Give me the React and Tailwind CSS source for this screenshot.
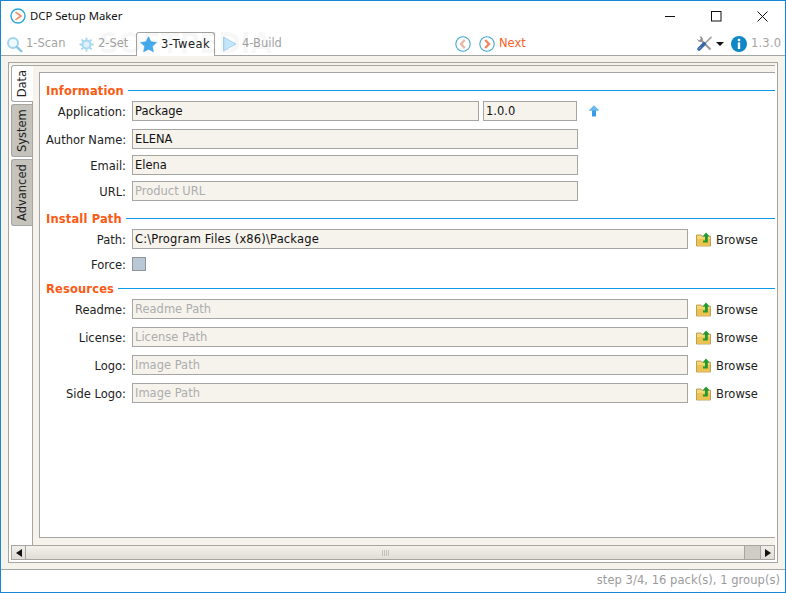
import React from "react";

function AppIcon() {
  return (
    <svg width="16" height="16" viewBox="0 0 16 16" className="shrink-0">
      <circle cx="8" cy="8" r="7" fill="#fff" stroke="#2ba6dc" strokeWidth="1.4" />
      <path d="M5.5 4.2 L11 8 L5.5 11.8" fill="none" stroke="#f28a6a" strokeWidth="1.6" />
    </svg>
  );
}

function SearchIcon() {
  return (
    <svg width="17" height="17" viewBox="0 0 17 17" className="shrink-0">
      <circle cx="7" cy="7" r="5" fill="#eef8fd" stroke="#9fd4ef" strokeWidth="2" />
      <path d="M10.8 10.8 L15.2 15.2" stroke="#8cc8e8" strokeWidth="2.6" strokeLinecap="round" />
    </svg>
  );
}

function GearIcon() {
  return (
    <svg width="15" height="15" viewBox="0 0 15 15" className="shrink-0">
      <circle cx="7.5" cy="7.5" r="4" fill="#dff1fb" stroke="#a7d8f2" strokeWidth="2" />
      <path
        d="M7.5 0.5V3 M7.5 12V14.5 M0.5 7.5H3 M12 7.5H14.5 M2.5 2.5L4.3 4.3 M10.7 10.7L12.5 12.5 M12.5 2.5L10.7 4.3 M4.3 10.7L2.5 12.5"
        stroke="#a7d8f2"
        strokeWidth="1.8"
      />
    </svg>
  );
}

function StarIcon() {
  return (
    <svg width="17" height="17" viewBox="0 0 17 17" className="shrink-0">
      <path
        d="M8.5 0.8 L10.9 5.7 L16.4 6.5 L12.4 10.3 L13.4 15.8 L8.5 13.2 L3.6 15.8 L4.6 10.3 L0.6 6.5 L6.1 5.7 Z"
        fill="#45aef0"
        stroke="#3a9de0"
        strokeWidth="0.6"
      />
    </svg>
  );
}

function PlayIcon() {
  return (
    <svg width="15" height="16" viewBox="0 0 15 16" className="shrink-0">
      <path d="M1.5 1 L14 8 L1.5 15 Z" fill="#c5e5f8" stroke="#a9d6f2" strokeWidth="1" />
    </svg>
  );
}

function NavIcon({ dir }) {
  return (
    <svg width="16" height="16" viewBox="0 0 16 16" className="shrink-0">
      <circle cx="8" cy="8" r="7.2" fill="#fff" stroke="#45a8d2" strokeWidth="1.1" />
      {dir === "left" ? (
        <path d="M9.8 4 L6 8 L9.8 12" fill="none" stroke="#e6b7a6" strokeWidth="2.4" />
      ) : (
        <path d="M6.2 4 L10 8 L6.2 12" fill="none" stroke="#ee8a62" strokeWidth="2.4" />
      )}
    </svg>
  );
}

function ToolsIcon() {
  return (
    <svg width="17" height="16" viewBox="0 0 17 16" className="shrink-0">
      <path d="M4.5 3.5 L14.5 13.5" stroke="#9a9a9a" strokeWidth="2.2" />
      <path d="M1 2.5 L3 4.5 L5.2 2.8 L3.5 0.5 L5.5 0.5 L7 3 L5.5 6 L2.5 5.6 Z" fill="#8d8d8d" />
      <path d="M15.5 0.8 L8.5 7.8" stroke="#a5a5a5" strokeWidth="1.7" />
      <path d="M8.2 7.8 L3 13" stroke="#3567a8" strokeWidth="3.6" strokeLinecap="round" />
      <path d="M2.8 13 L5 10.8" stroke="#7fa3d2" strokeWidth="1" />
    </svg>
  );
}

function InfoIcon() {
  return (
    <svg width="16" height="16" viewBox="0 0 16 16" className="shrink-0">
      <circle cx="8" cy="8" r="8" fill="#0f86c8" />
      <rect x="6.8" y="2.8" width="2.4" height="2.4" fill="#fff" />
      <rect x="6.8" y="6.4" width="2.4" height="6.6" fill="#fff" />
    </svg>
  );
}

function UpArrow() {
  return (
    <svg width="10" height="12" viewBox="0 0 10 12" className="shrink-0">
      <path d="M5 0.5 L10 5.5 H7 V11.5 H3 V5.5 H0 Z" fill="#3b9be6" />
      <path d="M5 0.5 L10 5.5 H0 Z" fill="#6cbaf0" />
    </svg>
  );
}

function FolderIcon() {
  return (
    <svg width="15" height="15" viewBox="0 0 15 15" className="shrink-0">
      <path d="M0.5 3 H5 L6 4.2 H14.5 V14 H0.5 Z" fill="#f5d873" stroke="#a88f45" strokeWidth="0.8" />
      <path d="M1 7 H14 V13.6 H1 Z" fill="#edc24f" />
      <path d="M10 0.5 L13.6 4.5 H11.8 V10.5 H7 V8.5 H9 V4.5 H6.6 Z" fill="#1f9a33" />
    </svg>
  );
}

function Input({ value, placeholder, w, wide }) {
  return (
    <div
      className={`h-5 border border-[#a5a5a1] bg-[#f6f3ed] pl-[2px] pt-[1px] flex items-center leading-none ${w} ${
        placeholder ? "text-[#adadad]" : "text-[#111]"
      } ${wide ? "tracking-[0.17px]" : ""}`}
    >
      {value || placeholder}
    </div>
  );
}

function Label({ children }) {
  return (
    <div className="w-[80px] text-right text-[#222] shrink-0 leading-[14px] translate-y-[1px] whitespace-nowrap">
      {children}
    </div>
  );
}

function Section({ title, top, children }) {
  return (
    <div className={top}>
      <div className="flex items-center gap-[4px] h-3">
        <span className="font-bold text-[#fa5a14] shrink-0 tracking-[0.15px] leading-[12px] translate-y-[1px]">
          {title}
        </span>
        <div className="h-px flex-1 bg-[#0d9ae2]" />
      </div>
      {children}
    </div>
  );
}

function PathRow({ label, placeholder, value, top, wide }) {
  return (
    <div className={`flex items-center gap-[6px] ${top}`}>
      <Label>{label}</Label>
      <Input value={value} placeholder={placeholder} w="w-[556px]" wide={wide} />
      <div className="flex items-center gap-[5px] ml-[2px] text-[#222]">
        <FolderIcon />
        <span className="leading-[14px] translate-y-[1px]">Browse</span>
      </div>
    </div>
  );
}

function Row({ label, value, placeholder, top }) {
  return (
    <div className={`flex items-center gap-[6px] ${top}`}>
      <Label>{label}</Label>
      <Input value={value} placeholder={placeholder} w="w-[446px]" />
    </div>
  );
}

function SideTab({ label, active, h, top }) {
  return (
    <div
      className={`${h} ${top} border border-r-0 border-[#a5a5a1] rounded-l-[3px] flex items-center justify-center ${
        active ? "bg-white relative w-[22px] z-10" : "bg-[#c5c3bb] w-[21px]"
      }`}
    >
      <span className="-rotate-90 whitespace-nowrap text-[#222] text-[11.5px]">{label}</span>
    </div>
  );
}

export default function App() {
  return (
    <div
      className="relative w-[786px] h-[593px] bg-white flex flex-col border border-[#1a87d6] text-[11.5px] overflow-hidden"
      style={{ fontFamily: '"DejaVu Sans", Verdana, sans-serif' }}
    >
      {/* title bar */}
      <div className="h-[30px] flex items-center pl-[9px] shrink-0">
        <AppIcon />
        <span className="ml-[4px] text-[11.3px] text-[#111]" style={{ fontFamily: '"Noto Sans", sans-serif' }}>
          DCP Setup Maker
        </span>
        <div className="ml-auto flex items-center">
          <svg width="11" height="11" viewBox="0 0 11 11" className="mr-[35px]">
            <path d="M0 5.5H10" stroke="#111" strokeWidth="1" />
          </svg>
          <svg width="11" height="11" viewBox="0 0 11 11" className="mr-[35px]">
            <rect x="0.5" y="0.5" width="9.5" height="9.5" fill="none" stroke="#111" strokeWidth="1" />
          </svg>
          <svg width="11" height="11" viewBox="0 0 11 11" className="mr-[17px]">
            <path d="M0.5 0.5L10.5 10.5M10.5 0.5L0.5 10.5" stroke="#111" strokeWidth="1" />
          </svg>
        </div>
      </div>

      {/* toolbar */}
      <div className="h-[25px] flex items-end shrink-0 relative -mb-px z-10 text-[#a3a3a3]">
        <div className="flex items-center h-[24px] pl-[5px] gap-[3px] w-[77px]">
          <SearchIcon />
          <span>1-Scan</span>
        </div>
        <div className="flex items-center h-[24px] pl-[1px] gap-[4px] w-[58px]">
          <GearIcon />
          <span>2-Set</span>
        </div>
        <div className="flex items-center h-[24px] w-[79px] pl-[3px] gap-[4px] border border-b-0 border-[#a5a5a1] rounded-t-[3px] bg-white text-[#222] tracking-[0.5px]">
          <StarIcon />
          <span>3-Tweak</span>
        </div>
        <div className="flex items-center h-[24px] pl-[7px] gap-[5px] w-[240px]">
          <PlayIcon />
          <span>4-Build</span>
        </div>
        <div className="flex items-center h-[24px] gap-[8px]">
          <NavIcon dir="left" />
          <NavIcon dir="right" />
        </div>
        <div className="flex items-center h-[24px] ml-[4px] text-[#f9622a] w-[197px]">Next</div>
        <div className="flex items-center h-[24px]">
          <ToolsIcon />
          <svg width="8" height="4" viewBox="0 0 8 4" className="ml-[3px]">
            <path d="M0 0H8L4 4Z" fill="#111" />
          </svg>
          <span className="ml-[7px]">
            <InfoIcon />
          </span>
          <span className="ml-[4px] tracking-[0.2px]">1.3.0</span>
        </div>
      </div>

      {/* main panel */}
      <div className="flex-1 min-h-0 border-y border-[#a5a5a1] bg-[#f6f3ed] pt-[6px] px-[7px] pb-[6px] flex">
        <div className="flex-1 border border-[#a5a5a1] bg-white flex flex-col">
          <div className="flex-1 min-h-0 flex flex-col">
            <div className="h-[2px] bg-[#f6f3ed]" />
            <div className="flex-1 min-h-0 flex">
              <div className="w-[24px] pl-[2px] shrink-0 flex flex-col">
                <SideTab label="Data" active h="h-[37px]" top="" />
                <SideTab label="System" h="h-[53px]" top="mt-[2px]" />
                <SideTab label="Advanced" h="h-[67px]" top="mt-[2px]" />
              </div>
              <div className="flex-1 -ml-px mr-[2px] border-l border-t border-[#a5a5a1] bg-[#f6f3ed] pl-[6px] pt-[6px] flex flex-col">
                <div className="flex-1 border-l border-t border-b border-[#a5a5a1] bg-white pl-[6px] pt-[11px] flex flex-col">
                  <Section title="Information">
                    <div className="flex items-center gap-[6px] mt-[5px]">
                      <Label>Application:</Label>
                      <Input value="Package" w="w-[347px]" />
                      <div className="ml-[-2px]">
                        <Input value="1.0.0" w="w-[94px]" />
                      </div>
                      <div className="ml-[6px]">
                        <UpArrow />
                      </div>
                    </div>
                    <Row label="Author Name:" value="ELENA" top="mt-[8px]" />
                    <Row label="Email:" value="Elena" top="mt-[6px]" />
                    <Row label="URL:" placeholder="Product URL" top="mt-[6px]" />
                  </Section>
                  <Section title="Install Path" top="mt-[11px]">
                    <PathRow label="Path:" value="C:\Program Files (x86)\Package" top="mt-[5px]" wide />
                    <div className="flex items-center gap-[6px] mt-[8px]">
                      <Label>Force:</Label>
                      <div className="w-[14px] h-[14px] border border-[#8f9499] bg-[#bac7d4]" />
                    </div>
                  </Section>
                  <Section title="Resources" top="mt-[11px]">
                    <PathRow label="Readme:" placeholder="Readme Path" top="mt-[5px]" />
                    <PathRow label="License:" placeholder="License Path" top="mt-[8px]" />
                    <PathRow label="Logo:" placeholder="Image Path" top="mt-[8px]" />
                    <PathRow label="Side Logo:" placeholder="Image Path" top="mt-[8px]" />
                  </Section>
                </div>
                <div className="h-[7px] shrink-0" />
              </div>
            </div>
          </div>

          {/* horizontal scrollbar */}
          <div className="h-[15px] mx-[2px] mb-[2px] border border-[#a5a5a1] flex shrink-0">
            <div className="w-[14px] border-r border-[#a5a5a1] bg-gradient-to-b from-[#f0eee8] to-[#dedcd4] flex items-center justify-center">
              <svg width="6" height="8" viewBox="0 0 6 8">
                <path d="M6 0V8L0 4Z" fill="#111" />
              </svg>
            </div>
            <div className="flex-1 bg-gradient-to-b from-[#f3f1eb] to-[#dfddd5] flex items-center justify-center gap-px">
              <div className="w-px h-[6px] bg-[#c2c0b8]" />
              <div className="w-px h-[6px] bg-[#c2c0b8]" />
              <div className="w-px h-[6px] bg-[#c2c0b8]" />
              <div className="w-px h-[6px] bg-[#c2c0b8]" />
            </div>
            <div className="w-[16px] border-l border-[#a5a5a1] bg-[#cfcdc6]" />
            <div className="w-[14px] border-l border-[#a5a5a1] bg-gradient-to-b from-[#f0eee8] to-[#dedcd4] flex items-center justify-center">
              <svg width="6" height="8" viewBox="0 0 6 8">
                <path d="M0 0V8L6 4Z" fill="#111" />
              </svg>
            </div>
          </div>
        </div>
      </div>

      {/* status bar */}
      <div className="h-[22px] shrink-0 flex items-center justify-end pr-[5px] text-[#9b9b9b] tracking-[0.05px]">
        step 3/4, 16 pack(s), 1 group(s)
      </div>

      {/* watermark */}
      <div className="absolute left-[98px] top-[29px] z-20 pointer-events-none text-[28px] font-bold leading-none text-black/[0.035] tracking-[-0.5px] whitespace-nowrap">
        SOFTPEDIA
      </div>
    </div>
  );
}
